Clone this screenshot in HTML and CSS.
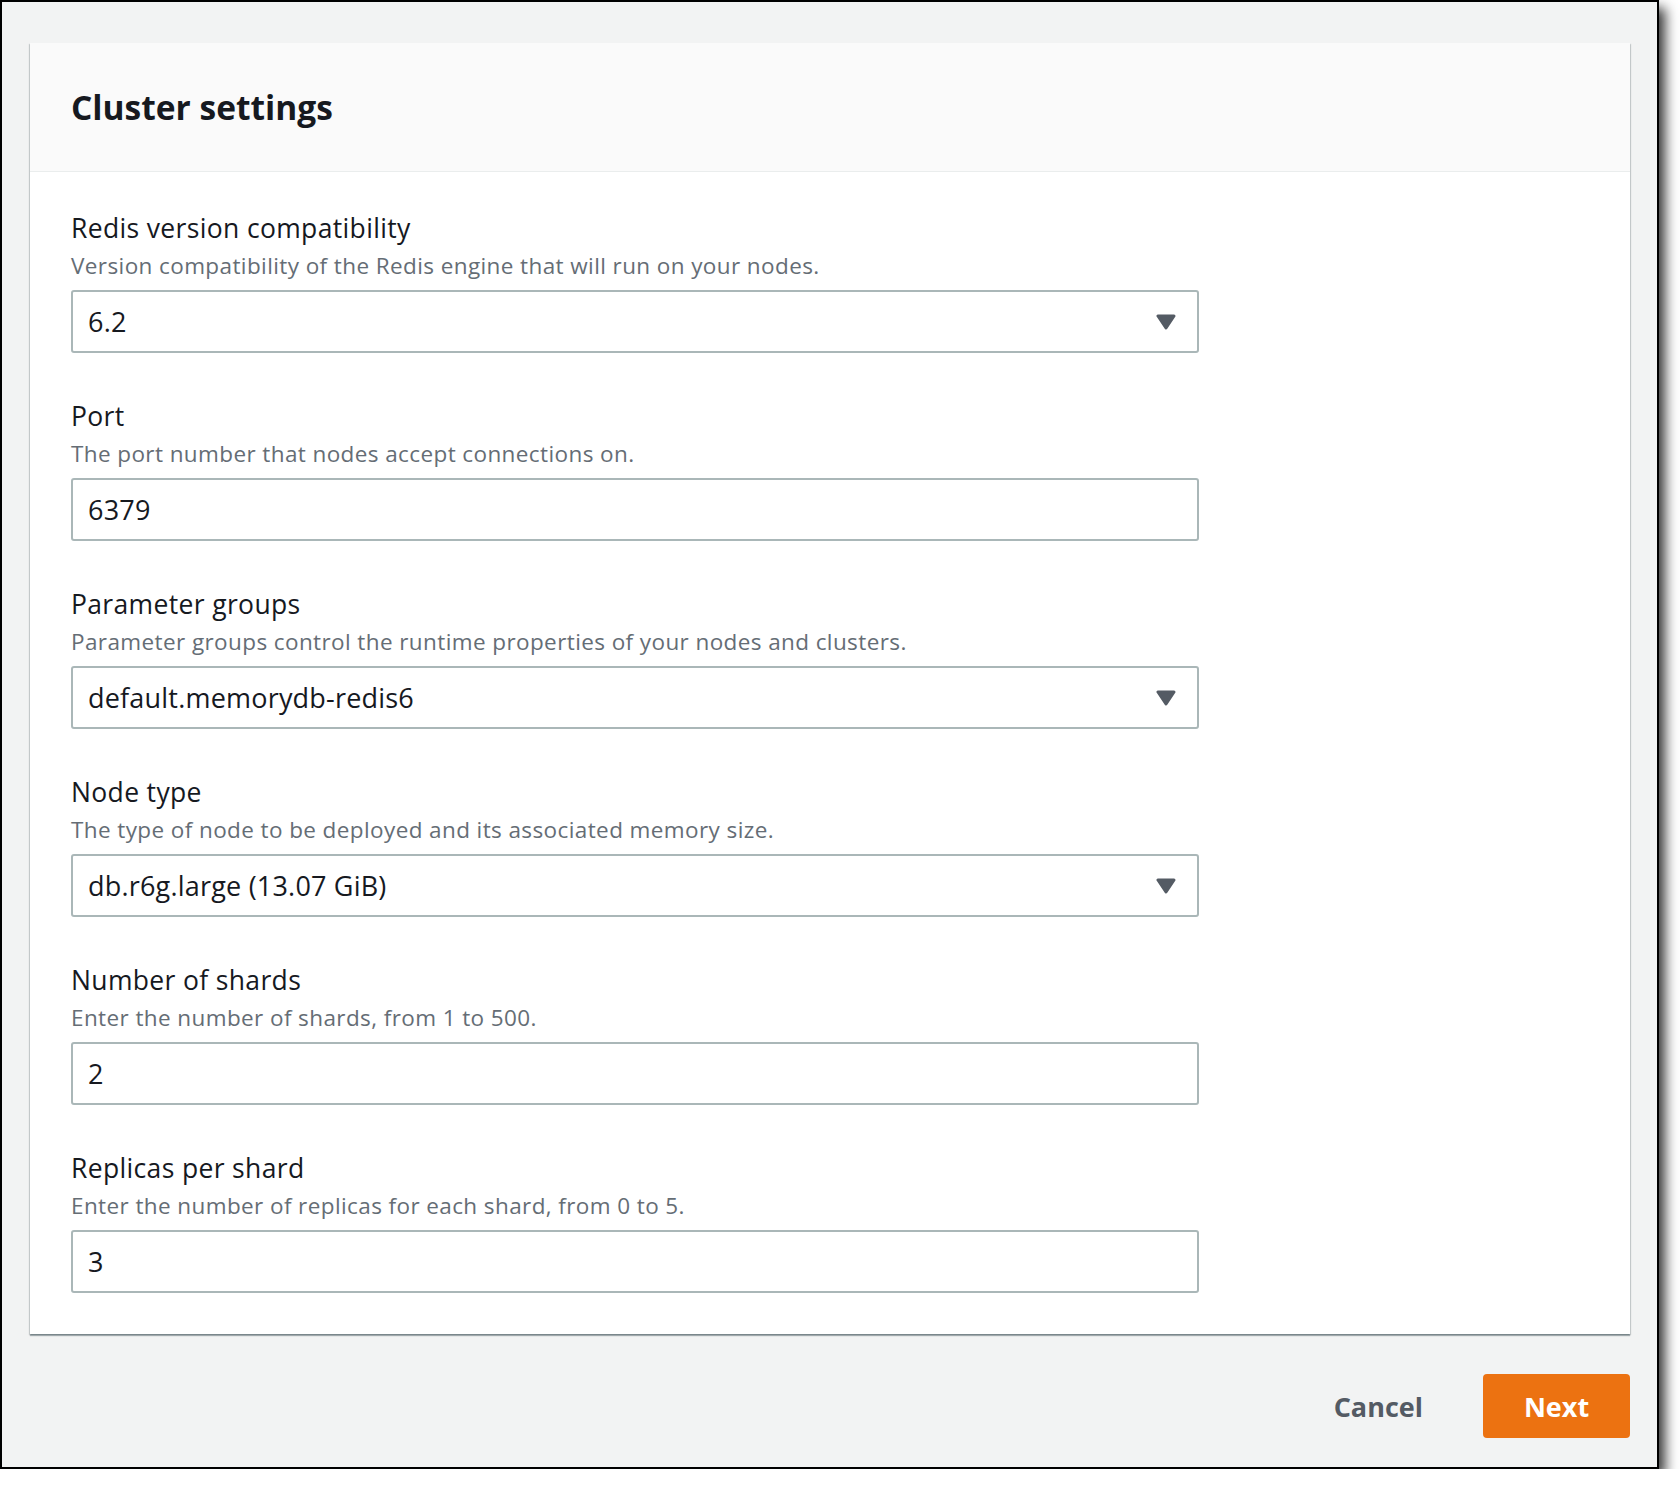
FILE: index.html
```html
<!DOCTYPE html>
<html lang="en">
<head>
<meta charset="utf-8">
<title>Cluster settings</title>
<link rel="stylesheet" href="styles.css">
</head>
<body>
<div class="frame">
  <section class="card">
    <header class="card-header"><h2 class="card-title">Cluster settings</h2></header>
    <div class="card-body">
      <div class="field">
        <div class="label">Redis version compatibility</div>
        <div class="desc">Version compatibility of the Redis engine that will run on your nodes.</div>
        <div class="control select"><span class="value">6.2</span><svg class="caret" viewBox="0 0 20 16" width="20" height="16"><polygon points="2,2 18,2 10,14" /></svg></div>
      </div>
      <div class="field">
        <div class="label">Port</div>
        <div class="desc">The port number that nodes accept connections on.</div>
        <div class="control"><span class="value">6379</span></div>
      </div>
      <div class="field">
        <div class="label">Parameter groups</div>
        <div class="desc">Parameter groups control the runtime properties of your nodes and clusters.</div>
        <div class="control select"><span class="value">default.memorydb-redis6</span><svg class="caret" viewBox="0 0 20 16" width="20" height="16"><polygon points="2,2 18,2 10,14" /></svg></div>
      </div>
      <div class="field">
        <div class="label">Node type</div>
        <div class="desc">The type of node to be deployed and its associated memory size.</div>
        <div class="control select"><span class="value">db.r6g.large (13.07 GiB)</span><svg class="caret" viewBox="0 0 20 16" width="20" height="16"><polygon points="2,2 18,2 10,14" /></svg></div>
      </div>
      <div class="field">
        <div class="label">Number of shards</div>
        <div class="desc">Enter the number of shards, from 1 to 500.</div>
        <div class="control"><span class="value">2</span></div>
      </div>
      <div class="field">
        <div class="label">Replicas per shard</div>
        <div class="desc">Enter the number of replicas for each shard, from 0 to 5.</div>
        <div class="control"><span class="value">3</span></div>
      </div>
    </div>
  </section>
  <div class="actions">
    <button class="btn btn-link" type="button">Cancel</button>
    <button class="btn btn-primary" type="button">Next</button>
  </div>
</div>
</body>
</html>
```

FILE: styles.css
```css
* { box-sizing: border-box; }

html, body {
  margin: 0;
  padding: 0;
  background: #ffffff;
}

body {
  font-family: "Open Sans", "Noto Sans", "Liberation Sans", sans-serif;
  color: #16191f;
}

.frame {
  width: 1659px;
  background: #f2f3f3;
  border: 2px solid #000;
  padding: 41px 27px 29px 28px;
  box-shadow: 6px 8px 12px rgba(0, 0, 0, 0.8);
}

.card {
  width: 1600px;
  background: #ffffff;
  box-shadow: 0 2px 1px 0 rgba(0, 28, 36, 0.3), 1px 1px 1px 0 rgba(0, 28, 36, 0.15), -1px 1px 1px 0 rgba(0, 28, 36, 0.15);
}

.card-header {
  height: 129px;
  background: #fafafa;
  border-bottom: 1px solid #eaeded;
  display: flex;
  align-items: center;
  padding: 0 41px;
}

.card-title {
  margin: 0;
  font-size: 33.5px;
  font-weight: 700;
  line-height: 40px;
  color: #16191f;
}

.card-body {
  padding: 40px 41px 41px;
  display: flex;
  flex-direction: column;
  gap: 47px;
}

.field {
  width: 1128px;
  display: flex;
  flex-direction: column;
}

.label {
  font-size: 26.5px;
  line-height: 32px;
  letter-spacing: 0.35px;
  color: #16191f;
}

.desc {
  margin-top: 6px;
  font-size: 22.5px;
  line-height: 32px;
  letter-spacing: 0.4px;
  color: #656d75;
}

.control {
  margin-top: 8px;
  height: 63px;
  border: 2px solid #aab7b8;
  border-radius: 3px;
  background: #fff;
  display: flex;
  align-items: center;
  padding: 0 21px 0 15px;
}

.value {
  flex: 1;
  font-size: 27px;
  line-height: 59px;
  letter-spacing: 0.2px;
  color: #16191f;
}

.caret {
  width: 20px;
  height: 16px;
  flex: none;
}

.caret polygon {
  fill: #545b64;
  stroke: #545b64;
  stroke-width: 3;
  stroke-linejoin: round;
}

.actions {
  margin-top: 40px;
  width: 1600px;
  display: flex;
  justify-content: flex-end;
  align-items: center;
}

.btn {
  font-family: inherit;
  font-size: 27px;
  font-weight: 700;
  border: none;
  cursor: pointer;
  height: 64px;
}

.btn-link {
  background: transparent;
  color: #545b64;
  padding: 0 30px;
  margin-right: 30px;
}

.btn-primary {
  width: 147px;
  background: #ec7211;
  color: #ffffff;
  border-radius: 4px;
  padding: 0;
}
```
